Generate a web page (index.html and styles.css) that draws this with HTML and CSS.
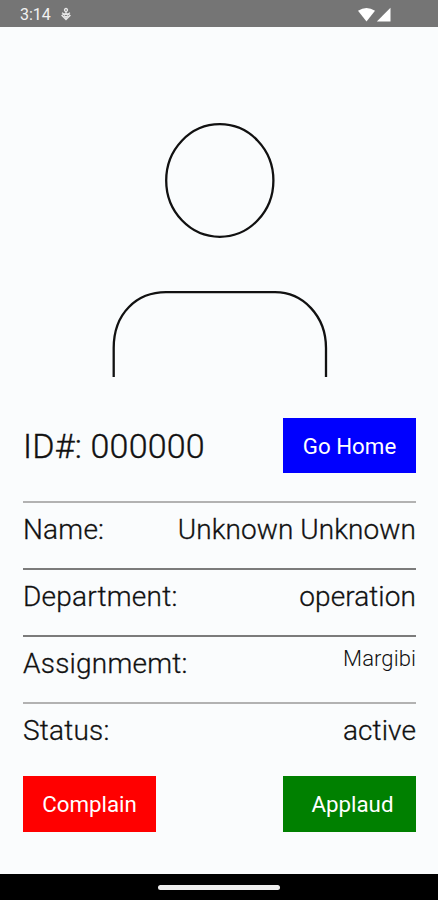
FILE: index.html
```html
<!DOCTYPE html>
<html lang="en">
<head>
<meta charset="utf-8">
<meta name="viewport" content="width=device-width">
<title>Staff profile</title>
<link rel="stylesheet" href="styles.css">
</head>
<body>
<header class="status-bar">
  <span class="clock">3:14</span>
  <svg class="debug" width="10" height="14" viewBox="0 0 10 14" fill="none" stroke="#e8e8e8" stroke-width="1.3"><circle cx="5" cy="3" r="1.500"/><path d="M5 4.500V6.500M1 5.800 3 7H7L9 5.800M1 8.500 5 12.500 9 8.500 7.500 7.300H2.500ZM3 8.500 5 10.300 7 8.500"/></svg>
  <svg class="signals" width="34" height="16" viewBox="0 0 34 16" fill="#fff"><path d="M0 3.8Q8.500-1.800 17 3.800L8.500 14.500Z"/><path d="M32.500 .8V14.500H18.800Z"/></svg>
</header>
<main class="profile">
  <svg class="avatar" width="216" height="255" viewBox="0 0 216 255" fill="none" stroke="#111" stroke-width="2.300"><ellipse cx="107.800" cy="58.500" rx="53.600" ry="56.300"/><path d="M1.700 255V226C1.700 191 25 170.200 54 170.200H163C191 170.200 214 194 214 226V255"/></svg>
  <section class="identity">
    <h1 class="id">ID#: 000000</h1>
    <button class="button home">Go Home</button>
  </section>
  <dl class="details">
    <div class="row soft"><dt>Name:</dt><dd>Unknown Unknown</dd></div>
    <div class="row"><dt>Department:</dt><dd>operation</dd></div>
    <div class="row"><dt>Assignmemt:</dt><dd class="small">Margibi</dd></div>
    <div class="row soft"><dt>Status:</dt><dd>active</dd></div>
  </dl>
  <section class="actions">
    <button class="button complain">Complain</button>
    <button class="button applaud">Applaud</button>
  </section>
</main>
<footer class="nav-bar"><span class="handle"></span></footer>
</body>
</html>
```
FILE: styles.css
```css
* { box-sizing: border-box; }
body {
  margin: 0;
  height: 900px;
  display: flex;
  flex-direction: column;
  background: #fafcfd;
  color: #111;
  font-family: Roboto, sans-serif;
  overflow: hidden;
}
.status-bar {
  height: 27px;
  flex: none;
  display: flex;
  align-items: center;
  padding: 2px 46px 0 20px;
  background: #757575;
  color: #f2f2f2;
}
.clock { font-size: 16px; line-height: 20px; }
.debug { margin-left: 10px; margin-top: -2px; }
.signals { margin-left: auto; }
.profile {
  flex: 1;
  display: flex;
  flex-direction: column;
  padding: 95px 22px 0 23px;
}
.avatar { flex: none; margin-left: 89px; }
.identity {
  display: flex;
  justify-content: space-between;
  align-items: center;
  height: 55px;
  margin-top: 41px;
}
.id {
  margin: 0;
  padding-top: 1px;
  font-size: 34px;
  line-height: 40px;
  font-weight: 300;
  letter-spacing: .2px;
  -webkit-text-stroke: .35px #111;
}
.button {
  width: 133px;
  height: 55px;
  padding: 0;
  border: 0;
  border-radius: 0;
  color: #fff;
  font: 400 22.3px/28px Roboto, sans-serif;
}
.home { background: #00f; }
.actions .button { height: 56px; }
.complain { background: #f00; }
.applaud { background: #008000; padding-left: 6px; }
.details { margin: 27.8px 0 0; }
.row {
  display: flex;
  justify-content: space-between;
  height: 67.2px;
  border-top: 2px solid #7b7b7b;
  padding-top: 10px;
  font-size: 28px;
  line-height: 34px;
  font-weight: 300;
  -webkit-text-stroke: .3px #111;
}
.soft { border-top-color: #b2b2b2; }
.row dt { letter-spacing: .22px; }
.row dd { margin: 0; letter-spacing: .08px; }
.row .small { font-size: 22px; line-height: 24px; -webkit-text-stroke: 0; }
.actions { display: flex; justify-content: space-between; margin-top: 6.4px; }
.nav-bar {
  height: 26px;
  flex: none;
  display: flex;
  justify-content: center;
  padding-top: 11px;
  background: #000;
}
.handle { width: 122px; height: 5px; border-radius: 3px; background: #eee; }
```
